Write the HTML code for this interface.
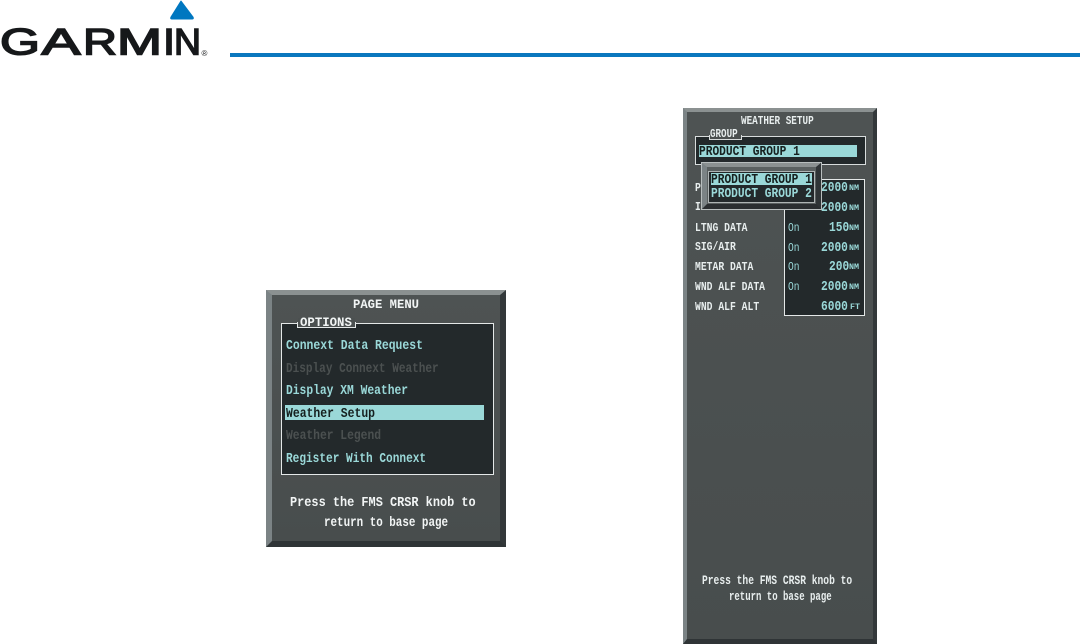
<!DOCTYPE html>
<html><head><meta charset="utf-8">
<style>
html,body{margin:0;padding:0;background:#fff;}
#p{position:relative;width:1080px;height:644px;overflow:hidden;background:#fff;}
#p div{position:absolute;box-sizing:border-box;}
.t{font-family:"Liberation Mono",monospace;font-weight:bold;white-space:pre;line-height:14px;height:14px;transform-origin:0 50%;font-size:14px;color:#9ad8d8;}
.d{color:#4b5050;}
.w{color:#f2f5f5;}
.k{color:#16201f;}
.s{font-size:11.5px;color:#e8eeee;transform:scaleX(.845);}
.c{transform:scaleX(.8);}
.o{font-size:12px;transform:scaleX(.8);font-weight:normal;}
.u{font-size:8px;transform:scaleX(1.05);}
</style></head><body>
<div id="p">
<svg style="position:absolute;left:0;top:0" width="230" height="70" font-family="Liberation Sans" font-size="37" fill="#16181a" stroke="#16181a" stroke-width="1.5">
<path d="M181 1 L193 17 Q194 19 192 19 L172 19 Q170 19 171 17 Z" fill="#0077c0" stroke="#0077c0" stroke-width="1" stroke-linejoin="round"/>
<text x="0" y="54.5" textLength="40" lengthAdjust="spacingAndGlyphs">G</text>
<text x="41.5" y="54.5" textLength="39" lengthAdjust="spacingAndGlyphs">A</text>
<text x="83" y="54.5" textLength="34" lengthAdjust="spacingAndGlyphs">R</text>
<text x="117" y="54.5" textLength="45" lengthAdjust="spacingAndGlyphs">M</text>
<text x="163" y="54.5" textLength="12" lengthAdjust="spacingAndGlyphs">I</text>
<text x="174" y="54.5" textLength="27" lengthAdjust="spacingAndGlyphs">N</text>
<text x="201.5" y="56" font-size="8" stroke="none">®</text>
</svg>
<div style="left:230px;top:53px;width:850px;height:4px;background:#0a77be"></div>

<!-- left panel -->
<div style="left:266px;top:290px;width:240px;height:257px;border-style:solid;border-width:5px 6px 6px 6px;border-color:#8b9191 #33383a #2f3436 #7b8385;background:linear-gradient(#4e5353,#484d4d)"></div>
<div class="t w" style="left:353px;top:298px;font-size:13px;transform:scaleX(.94)">PAGE MENU</div>
<div style="left:281px;top:323px;width:213px;height:152px;border:1px solid #e4e8e8;background:#23292b"></div>
<div style="left:297px;top:322px;width:59px;height:6px;background:#23292b;border-bottom:1px solid #e4e8e8;border-left:1px solid #e4e8e8;border-right:1px solid #e4e8e8"></div>
<div style="left:298px;top:318px;width:57px;height:9px;background:#4b5050"></div>
<div class="t w" style="left:300px;top:316px;font-size:13px;transform:scaleX(.95)">OPTIONS</div>
<div class="t" style="left:286px;top:339px;transform:scaleX(.815)">Connext Data Request</div>
<div class="t d" style="left:286px;top:362px;transform:scaleX(.79)">Display Connext Weather</div>
<div class="t" style="left:286px;top:384px;transform:scaleX(.807)">Display XM Weather</div>
<div style="left:285px;top:405px;width:199px;height:15px;background:#9ad8d8"></div>
<div class="t k" style="left:286px;top:407px;transform:scaleX(.815)">Weather Setup</div>
<div class="t d" style="left:286px;top:429px;transform:scaleX(.808)">Weather Legend</div>
<div class="t" style="left:286px;top:452px;transform:scaleX(.794)">Register With Connext</div>
<div class="t w" style="left:290px;top:496px;transform:scaleX(.85)">Press the FMS CRSR knob to</div>
<div class="t w" style="left:324px;top:516px;transform:scaleX(.777)">return to base page</div>

<!-- right panel -->
<div style="left:683px;top:108px;width:194px;height:536px;border-style:solid;border-width:4px 4px 5px 4px;border-color:#8b9191 #33383a #2f3436 #7b8385;background:linear-gradient(#4e5353,#484d4d)"></div>
<div class="t s" style="left:741px;top:115px;transform:scaleX(.81)">WEATHER SETUP</div>
<div style="left:695px;top:136px;width:171px;height:29px;border:1px solid #d8dcdc;background:#23292b"></div>
<div style="left:709px;top:135px;width:33px;height:5px;background:#4b5050;border:1px solid #d8dcdc;border-top:0"></div>
<div style="left:710px;top:131px;width:31px;height:8px;background:#4b5050"></div>
<div class="t s" style="left:710px;top:128px;transform:scaleX(.8)">GROUP</div>
<div style="left:699px;top:145px;width:158px;height:12px;background:#9ad8d8"></div>
<div class="t c k" style="left:699px;top:145px">PRODUCT GROUP 1</div>

<div style="left:784px;top:179px;width:81px;height:137px;border:1px solid #e4e8e8;background:#23292b"></div>
<div class="t c" style="left:821px;top:181px">2000</div><div class="t u" style="left:849px;top:182px">NM</div>
<div class="t c" style="left:821px;top:201px">2000</div><div class="t u" style="left:849px;top:202px">NM</div>
<div class="t c" style="left:829px;top:221px">150</div><div class="t u" style="left:849px;top:222px">NM</div>
<div class="t c" style="left:821px;top:241px">2000</div><div class="t u" style="left:849px;top:242px">NM</div>
<div class="t c" style="left:829px;top:260px">200</div><div class="t u" style="left:849px;top:261px">NM</div>
<div class="t c" style="left:821px;top:280px">2000</div><div class="t u" style="left:849px;top:281px">NM</div>
<div class="t c" style="left:821px;top:300px">6000</div><div class="t u" style="left:850px;top:301px">FT</div>
<div class="t o" style="left:788px;top:221px">On</div>
<div class="t o" style="left:788px;top:241px">On</div>
<div class="t o" style="left:788px;top:260px">On</div>
<div class="t o" style="left:788px;top:280px">On</div>

<div class="t s" style="left:695px;top:182px">P</div>
<div class="t s" style="left:695px;top:201px">I</div>
<div class="t s" style="left:695px;top:222px">LTNG DATA</div>
<div class="t s" style="left:695px;top:241px">SIG/AIR</div>
<div class="t s" style="left:695px;top:261px">METAR DATA</div>
<div class="t s" style="left:695px;top:281px">WND ALF DATA</div>
<div class="t s" style="left:695px;top:301px">WND ALF ALT</div>

<!-- popup -->
<div style="left:701px;top:162px;width:121px;height:48px;border-style:solid;border-width:5px 6px 6px 6px;border-color:#8b9191 #2f3436 #2a2e30 #7b8385;background:#5a6060;outline:1px solid #b8bebe;outline-offset:-1px"></div>
<div style="left:708px;top:171px;width:107px;height:32px;border:1px solid #aeb4b4;background:#23292b"></div>
<div style="left:711px;top:173px;width:101px;height:12px;background:#9ad8d8"></div>
<div class="t c k" style="left:711px;top:173px">PRODUCT GROUP 1</div>
<div class="t c" style="left:711px;top:187px">PRODUCT GROUP 2</div>

<div class="t s" style="left:702px;top:574px;font-size:12.5px;transform:scaleX(.77)">Press the FMS CRSR knob to</div>
<div class="t s" style="left:729px;top:590px;font-size:12.5px;transform:scaleX(.72)">return to base page</div>
</div>
</body></html>
